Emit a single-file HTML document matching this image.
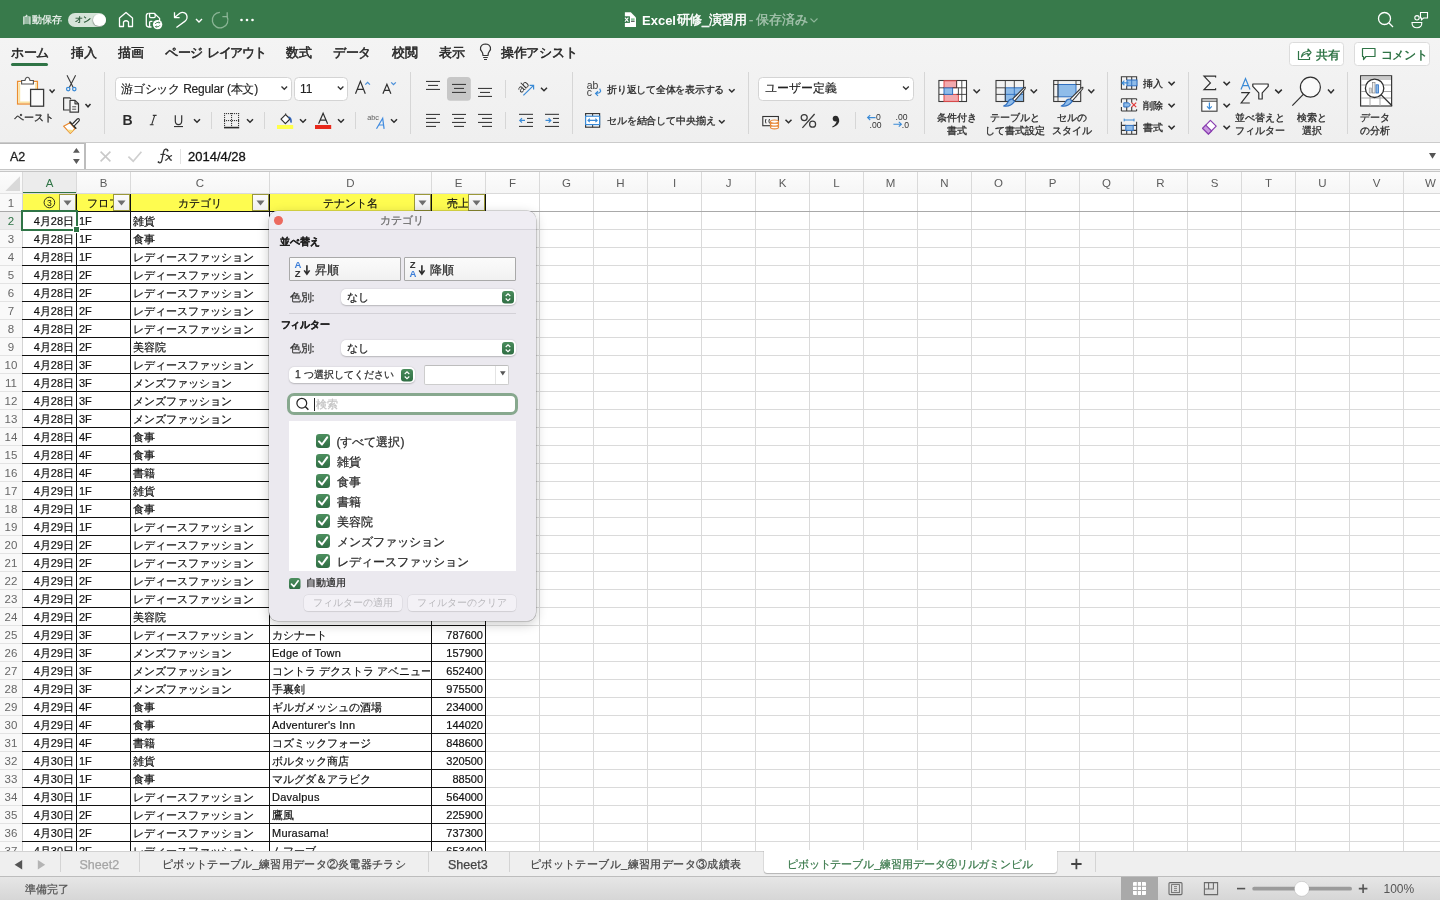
<!DOCTYPE html><html><head><meta charset="utf-8"><style>
*{box-sizing:border-box;margin:0;padding:0}
html,body{width:1440px;height:900px;overflow:hidden;background:#fff;font-family:"Liberation Sans",sans-serif;color:#222}
.a{position:absolute}
#title{left:0;top:0;width:1440px;height:38px;background:#387a4b}
#tabs{left:0;top:38px;width:1440px;height:103px;background:linear-gradient(#f4f4f4,#efefef)}
.tab{position:absolute;top:44.5px;font-size:12.6px;letter-spacing:-0.3px;-webkit-text-stroke:0.5px #262626;color:#262626;white-space:nowrap}
.sep{position:absolute;width:1px;background:#d4d4d4}
.chev{position:absolute;width:6px;height:4px}
.lbl{position:absolute;font-size:10px;color:#2b2b2b;-webkit-text-stroke:0.3px #2b2b2b;text-align:center;line-height:13px;white-space:nowrap}
#fbar{left:0;top:141px;width:1440px;height:30px;background:#f0f0f0}
#colhdr{left:0;top:171px;width:1440px;height:22px;background:#f8f8f8;border-bottom:1px solid #cfcfcf}
.ch{position:absolute;top:0;height:21px;line-height:21px;font-size:11.5px;color:#5c5c5c;text-align:center;padding-top:0.5px;padding-left:1px}
.rh{position:absolute;left:0;width:22px;height:17px;line-height:17px;font-size:11.5px;color:#666;text-align:center}
.cell{position:absolute;height:17px;line-height:17px;font-size:11px;color:#111;-webkit-text-stroke:0.2px #111;white-space:nowrap;overflow:hidden}
</style></head><body><div id="root" style="position:absolute;left:0;top:0;width:1440px;height:900px;overflow:hidden;will-change:transform">
<div id="title" class="a">
<div class="a" style="left:22px;top:14.5px;font-size:10px;line-height:1;color:#dfe9e2;font-weight:bold;white-space:nowrap">自動保存</div>
<div class="a" style="left:68px;top:13px;width:38px;height:14px;border-radius:7px;background:#d6e4d9"></div>
<div class="a" style="left:75px;top:16px;font-size:8px;line-height:1;color:#2c5a3a;-webkit-text-stroke:0.35px #2c5a3a">オン</div>
<div class="a" style="left:93px;top:13.8px;width:12.6px;height:12.6px;border-radius:50%;background:#fff;box-shadow:-0.5px 0.8px 1.2px rgba(0,0,0,.35)"></div>
</div>
<div class="a" style="left:642px;top:13.5px;font-size:13px;line-height:1;font-weight:bold;color:#fff;white-space:nowrap">Excel</div>
<div class="a" style="left:676.5px;top:13.5px;font-size:12.6px;line-height:1;color:#fff;white-space:nowrap;-webkit-text-stroke:0.45px #fff;letter-spacing:-0.3px">研修_演習用</div>
<div class="a" style="left:749px;top:13.5px;font-size:12.6px;line-height:1;color:#a3c2ac;white-space:nowrap;-webkit-text-stroke:0.4px #a3c2ac;letter-spacing:-0.2px">- 保存済み</div>
<div id="tabs" class="a"></div>
<div class="tab" style="left:11px">ホーム</div>
<div class="tab" style="left:71px">挿入</div>
<div class="tab" style="left:118px">描画</div>
<div class="tab" style="left:165px">ページ<span style="letter-spacing:0"> </span><span style="letter-spacing:-1.1px">レイアウト</span></div>
<div class="tab" style="left:286px">数式</div>
<div class="tab" style="left:333px">データ</div>
<div class="tab" style="left:392px">校閲</div>
<div class="tab" style="left:439px">表示</div>
<div class="tab" style="left:501px">操作アシスト</div>
<div class="a" style="left:11px;top:63px;width:37px;height:3px;border-radius:2px;background:#2f7446"></div>
<svg class="a" style="left:0;top:0" width="1440" height="141" viewBox="0 0 1440 141" fill="none" stroke-linecap="butt">
<!-- title bar icons -->
<g stroke="#fff" stroke-width="1.3" fill="none">
 <path d="M119.5 26.5 V18 L126 12.5 L132.5 18 V26.5 H128.5 V22 Q126 19.5 123.5 22 V26.5 Z" stroke-linejoin="round"/>
 <path d="M149 13.3 H154.2 L159.6 18.4 V21 M151.5 27 H148.6 Q146.3 27 146.3 24.6 V15.7 Q146.3 13.3 148.7 13.3" stroke-linejoin="round"/>
 <path d="M149.6 13.5 V16.6 Q149.6 17.6 150.6 17.6 H154.2 Q155.2 17.6 155.2 16.6 V13.8" />
 <path d="M149.6 27 V22.4 Q149.6 21.4 150.6 21.4 H152.4" />
 <circle cx="157.6" cy="24.6" r="4.7" fill="#fff" stroke="none"/>
 <path d="M155.2 24 Q156 22.2 158.2 22.4 L159.6 22.6 M158.8 21.6 L159.8 22.6 L158.8 23.4 M160 25.2 Q159.2 27 157 26.8 L155.6 26.6 M156.4 27.6 L155.4 26.6 L156.4 25.8" stroke="#387a4b" stroke-width="0.9"/>
 <path d="M174.5 12.2 V17.6 H179.6 M174.6 17.5 L179.8 13.2 Q182.2 11.8 184.6 12.9 Q187.6 14.6 186.9 18.4 Q186.5 20.2 184.8 21.4 L176.4 27.6" stroke-linejoin="round"/>
 <path d="M196 19 L199 22 L202 19" stroke-width="1.4"/>
 <g stroke="#8bb596"><path d="M227 16.4 A7.8 7.8 0 1 1 219.9 12.3" /><path d="M227.2 12.2 V16.6 H222.4"/></g>
 <circle cx="241.5" cy="20" r="1.3" fill="#fff" stroke="none"/><circle cx="247" cy="20" r="1.3" fill="#fff" stroke="none"/><circle cx="252.5" cy="20" r="1.3" fill="#fff" stroke="none"/>
 <circle cx="1384.5" cy="18.5" r="6"/><path d="M1389 23 L1393 27"/>
 <circle cx="1417" cy="17.8" r="2.2" stroke-width="1.1"/>
 <path d="M1412 22.5 H1421.8 Q1422 27.8 1417 27.8 Q1412 27.8 1412 22.5 Z" stroke-width="1.1"/>
 <path d="M1420.5 12.5 H1427.5 V18 H1423.5 L1421.5 19.8 V18 H1420.5 Z" stroke-width="1.1"/>
</g>
<path d="M810.5 18.5 L814 22 L817.5 18.5" stroke="#8fb79b" stroke-width="1.1" fill="none"/>
<!-- file icon in title -->
<path d="M624.9 12.3 H630.8 L636 17.4 V26.9 H624.9 Z" fill="#fff"/>
<rect x="623.4" y="16.3" width="6.5" height="6.6" fill="#2f7446"/>
<path d="M624.9 17.6 L628.4 21.6 M628.4 17.6 L624.9 21.6" stroke="#fff" stroke-width="1.1"/>
<rect x="631" y="18.3" width="3.6" height="2.4" fill="#8cc59c"/><rect x="631" y="20.9" width="3.6" height="1" fill="#555"/>
<!-- tab row buttons -->
<rect x="1289.5" y="42.5" width="54" height="23" rx="3" fill="#fff" stroke="#dcdcdc"/>
<rect x="1354.5" y="42.5" width="75" height="23" rx="3" fill="#fff" stroke="#dcdcdc"/>
<g stroke="#2f7446" stroke-width="1.2" fill="none">
 <path d="M1298.5 51 V59.5 H1309.5 V57"/>
 <path d="M1301.5 57 Q1302 51.5 1308 51.5 V49 L1311 52.5 L1308 56 V53.5 Q1304 53.5 1301.5 57 Z" stroke-linejoin="round"/>
 <path d="M1362.5 48.5 H1375 V56.5 H1366 L1363.5 59.5 V56.5 H1362.5 Z" stroke-linejoin="round"/>
</g>
<!-- ribbon separators -->
<g fill="#d6d6d6">
 <rect x="104" y="72" width="1" height="62"/>
 <rect x="410" y="72" width="1" height="62"/>
 <rect x="572" y="72" width="1" height="62"/>
 <rect x="748" y="72" width="1" height="62"/>
 <rect x="924" y="72" width="1" height="62"/>
 <rect x="1107" y="72" width="1" height="62"/>
 <rect x="1188" y="72" width="1" height="62"/>
 <rect x="1347" y="72" width="1" height="62"/>
 <rect x="211" y="112" width="1" height="17"/>
 <rect x="264" y="112" width="1" height="17"/>
 <rect x="355" y="112" width="1" height="17"/>
 <rect x="505" y="80" width="1" height="18"/>
 <rect x="505" y="112" width="1" height="17"/>
 <rect x="855" y="112" width="1" height="17"/>
</g>
<!-- clipboard -->
<defs><linearGradient id="clipg" x1="0" y1="0" x2="0" y2="1"><stop offset="0" stop-color="#fffdf5"/><stop offset="1" stop-color="#fbe7a6"/></linearGradient></defs>
<rect x="17.6" y="81.4" width="19.8" height="22.6" fill="#fff" stroke="#eb8d2f" stroke-width="1.3"/><path d="M19.4 83 V102.2 H36 V83" fill="none" stroke="#fae3a2" stroke-width="1.6"/>
<path d="M21.6 84 V80.5 H25 Q25.5 77.3 27.5 77.3 Q29.5 77.3 30 80.5 H33.4 V84 Z" fill="#fff" stroke="#555" stroke-width="1.1"/>
<rect x="30.6" y="89.4" width="13" height="16.8" fill="#fbfbfb" stroke="#3a3a3a" stroke-width="1.3"/>
<!-- font boxes -->
<rect x="115.5" y="77.5" width="176" height="23" rx="4" fill="#fff" stroke="#d4d4d4"/>
<rect x="294.5" y="77.5" width="53" height="23" rx="4" fill="#fff" stroke="#d4d4d4"/>
<rect x="758.5" y="77.5" width="155" height="23" rx="4" fill="#fff" stroke="#d4d4d4"/>
<!-- chevrons -->
<g stroke="#2e2e2e" stroke-width="1.5" fill="none" stroke-linejoin="miter">
 <path d="M49.6 89.6 L52.1 92.4 L54.6 89.6"/>
 <path d="M85.5 104 L88 106.8 L90.5 104"/>
 <path d="M194 119.3 L197 122.3 L200 119.3"/>
 <path d="M247 119.3 L250 122.3 L253 119.3"/>
 <path d="M300 119.3 L303 122.3 L306 119.3"/>
 <path d="M338 119.3 L341 122.3 L344 119.3"/>
 <path d="M391 119.3 L394 122.3 L397 119.3"/>
 <path d="M541 87.8 L544 90.8 L547 87.8"/>
 <path d="M729 89.2 L731.8 92 L734.6 89.2"/>
 <path d="M719 120.2 L721.8 123 L724.6 120.2"/>
 <path d="M785.5 119.8 L788.5 122.8 L791.5 119.8"/>
 <path d="M973.5 89.5 L976.7 92.7 L979.9 89.5"/>
 <path d="M1030.6 89.5 L1033.8 92.7 L1037 89.5"/>
 <path d="M1088.3 89.5 L1091.3 92.7 L1094.3 89.5"/>
 <path d="M1168.5 81.8 L1171.6 84.9 L1174.7 81.8"/>
 <path d="M1168.5 103.8 L1171.6 106.9 L1174.7 103.8"/>
 <path d="M1168.5 125.8 L1171.6 128.9 L1174.7 125.8"/>
 <path d="M1223.5 81.8 L1226.7 84.9 L1229.9 81.8"/>
 <path d="M1223.5 103.8 L1226.7 106.9 L1229.9 103.8"/>
 <path d="M1223.5 125.8 L1226.7 128.9 L1229.9 125.8"/>
 <path d="M1275.2 89.6 L1278.5 92.9 L1281.8 89.6"/>
 <path d="M1328 89.6 L1331 92.9 L1334 89.6"/>
</g>
<!-- dropdown chevrons in boxes -->
<g stroke="#333" stroke-width="1.3" fill="none">
 <path d="M281.5 86.5 L284.3 89.3 L287.1 86.5"/>
 <path d="M337.8 86.5 L340.6 89.3 L343.4 86.5"/>
 <path d="M903 86.5 L905.9 89.3 L908.8 86.5"/>
</g>
<!-- scissors -->
<g stroke="#3a3a3a" stroke-width="1.1" fill="none">
 <path d="M67 75.3 L73.2 87.6 M75.6 75.3 L69.3 87.6"/>
</g>
<g stroke="#3a8ad6" stroke-width="1.2" fill="none">
 <circle cx="68.2" cy="89.1" r="1.7"/><circle cx="74.3" cy="89.1" r="1.7"/>
</g>
<!-- copy -->
<g stroke="#3a3a3a" stroke-width="1.2" fill="none" stroke-linejoin="round">
 <path d="M69.5 110 H63.6 V97.8 H69.8 L71 99.2"/>
 <path d="M70 100.4 H75 L78.5 103.8 V112.2 H70 Z" fill="#f7f7f7"/>
 <path d="M75 100.4 V103.8 H78.5"/>
 <path d="M72.2 106.8 H76.2 M72.2 109.2 H76.2" stroke-width="0.9"/>
</g>
<!-- format painter -->
<path d="M63.6 126.2 L70 122.8 L75 128.6 L70.3 133.4 Z" fill="#fff" stroke="#e8892e" stroke-width="1.2" stroke-linejoin="round"/>
<path d="M66.8 129.4 L73.6 130 L70.3 133.2 Z" fill="#f6dc85"/>
<path d="M70 122 L75.8 128.2" stroke="#2b2b2b" stroke-width="1.6" stroke-linecap="round"/>
<path d="M72.4 124 L77.3 119 Q78.3 118.2 79.1 119 Q79.8 119.9 79 120.8 L74.3 125.9" fill="#fff" stroke="#2b2b2b" stroke-width="1.1" stroke-linejoin="round"/>
<!-- A^ A v -->
<g stroke="#2f2f2f" stroke-width="1.2" fill="none">
 <path d="M355.5 93.8 L360.4 81.3 L365.3 93.8 M357.3 89.4 H363.5"/>
 <path d="M382.9 93.8 L386.9 84.3 L390.9 93.8 M384.5 90.4 H389.3"/>
</g>
<g stroke="#4a8fd9" stroke-width="1.3" fill="none">
 <path d="M365.3 84.6 L367.6 82.3 L369.9 84.6"/>
 <path d="M391.2 82.4 L393.5 84.7 L395.8 82.4"/>
</g>
<!-- B I U -->
<text x="122.5" y="125" font-size="14" font-weight="bold" fill="#2b2b2b" font-family="Liberation Sans">B</text>
<path d="M152.8 115.4 H156.6 M149.8 124.7 H153.6 M154.7 115.4 L151.7 124.7" stroke="#333" stroke-width="1.1"/>
<path d="M175.3 115.2 V120.8 Q175.3 124.6 178.5 124.6 Q181.7 124.6 181.7 120.8 V115.2" stroke="#333" stroke-width="1.2" fill="none"/>
<rect x="174" y="126" width="9" height="1.1" fill="#333"/>
<!-- borders icon -->
<g fill="#3a3a3a"><rect x="224" y="113" width="1.1" height="1.1"/><rect x="224" y="120" width="1.1" height="1.1"/><rect x="226" y="113" width="1.1" height="1.1"/><rect x="226" y="120" width="1.1" height="1.1"/><rect x="228" y="113" width="1.1" height="1.1"/><rect x="228" y="120" width="1.1" height="1.1"/><rect x="230" y="113" width="1.1" height="1.1"/><rect x="230" y="120" width="1.1" height="1.1"/><rect x="232" y="113" width="1.1" height="1.1"/><rect x="232" y="120" width="1.1" height="1.1"/><rect x="234" y="113" width="1.1" height="1.1"/><rect x="234" y="120" width="1.1" height="1.1"/><rect x="236" y="113" width="1.1" height="1.1"/><rect x="236" y="120" width="1.1" height="1.1"/><rect x="238" y="113" width="1.1" height="1.1"/><rect x="238" y="120" width="1.1" height="1.1"/><rect x="224" y="113" width="1.1" height="1.1"/><rect x="231" y="113" width="1.1" height="1.1"/><rect x="238" y="113" width="1.1" height="1.1"/><rect x="224" y="115" width="1.1" height="1.1"/><rect x="231" y="115" width="1.1" height="1.1"/><rect x="238" y="115" width="1.1" height="1.1"/><rect x="224" y="117" width="1.1" height="1.1"/><rect x="231" y="117" width="1.1" height="1.1"/><rect x="238" y="117" width="1.1" height="1.1"/><rect x="224" y="119" width="1.1" height="1.1"/><rect x="231" y="119" width="1.1" height="1.1"/><rect x="238" y="119" width="1.1" height="1.1"/><rect x="224" y="121" width="1.1" height="1.1"/><rect x="231" y="121" width="1.1" height="1.1"/><rect x="238" y="121" width="1.1" height="1.1"/><rect x="224" y="123" width="1.1" height="1.1"/><rect x="231" y="123" width="1.1" height="1.1"/><rect x="238" y="123" width="1.1" height="1.1"/><rect x="224" y="125" width="1.1" height="1.1"/><rect x="231" y="125" width="1.1" height="1.1"/><rect x="238" y="125" width="1.1" height="1.1"/></g>
<rect x="224" y="126.8" width="15.2" height="1.6" fill="#2b2b2b"/>
<!-- fill color -->
<path d="M281 119.2 L285.6 114.6 L290 119 L285.4 123.6 Z" fill="#fff" stroke="#2f2f2f" stroke-width="1.2" stroke-linejoin="round"/>
<path d="M285.6 114.6 V113.4" stroke="#2f2f2f" stroke-width="1.2"/>
<path d="M288.4 117 Q291.4 117.5 291 122.6" stroke="#2d5fb4" stroke-width="1.6" fill="none"/>
<rect x="277" y="125" width="16.2" height="4" fill="#ffff4b"/>
<!-- font color -->
<path d="M318.6 123.8 L323.1 113.2 L327.6 123.8 M320.1 120.2 H326.1" stroke="#2f2f2f" stroke-width="1.2" fill="none"/>
<rect x="315" y="125" width="16.2" height="4" fill="#e8291c"/>
<!-- abc A -->
<text x="367.2" y="119.6" font-size="7.3" fill="#5e5e5e" font-family="Liberation Sans">abc</text>
<path d="M376.5 128.8 L382.7 118.3 L384.1 128.8 M378.8 125 H383.6" stroke="#3f8be0" stroke-width="1.2" fill="none"/>
<!-- alignment -->
<g fill="#3e3e3e">
 <rect x="447" y="77" width="23.8" height="23.8" rx="3.5" fill="#c7c7c7"/>
 <rect x="426" y="80.9" width="14" height="1.1"/><rect x="428" y="84.9" width="10" height="1.1"/><rect x="426" y="88.9" width="14" height="1.1"/>
 <rect x="452" y="83.9" width="14" height="1.1"/><rect x="454" y="87.9" width="10" height="1.1"/><rect x="452" y="91.9" width="14" height="1.1"/>
 <rect x="478" y="87.9" width="14" height="1.1"/><rect x="480" y="91.9" width="10" height="1.1"/><rect x="478" y="95.9" width="14" height="1.1"/>
 <rect x="426" y="113.9" width="14" height="1.1"/><rect x="426" y="117.9" width="10" height="1.1"/><rect x="426" y="121.9" width="14" height="1.1"/><rect x="426" y="125.9" width="10" height="1.1"/>
 <rect x="452" y="113.9" width="14" height="1.1"/><rect x="454" y="117.9" width="10" height="1.1"/><rect x="452" y="121.9" width="14" height="1.1"/><rect x="454" y="125.9" width="10" height="1.1"/>
 <rect x="478" y="113.9" width="14" height="1.1"/><rect x="482" y="117.9" width="10" height="1.1"/><rect x="478" y="121.9" width="14" height="1.1"/><rect x="482" y="125.9" width="10" height="1.1"/>
 <rect x="519" y="113.8" width="14" height="1.1"/><rect x="527" y="117.9" width="6" height="1.1"/><rect x="527" y="121.9" width="6" height="1.1"/><rect x="519" y="125.9" width="14" height="1.1"/>
 <rect x="545" y="113.8" width="14" height="1.1"/><rect x="553" y="117.9" width="6" height="1.1"/><rect x="553" y="121.9" width="6" height="1.1"/><rect x="545" y="125.9" width="14" height="1.1"/>
</g>
<g stroke="#3a8ad6" stroke-width="1.2" fill="none">
 <path d="M519.5 120.4 H525 M522 118.2 L519.8 120.4 L522 122.6"/>
 <path d="M545.5 120.4 H551 M548.6 118.2 L550.8 120.4 L548.6 122.6"/>
</g>
<!-- orientation -->
<text x="0" y="0" font-size="11" fill="#333" font-family="Liberation Sans" transform="translate(521.2 93.6) rotate(-45)">ab</text>
<g stroke="#3a8ad6" stroke-width="1.2" fill="none">
 <path d="M523.4 95.4 L533.6 85.4 M529.6 85.4 H533.6 V89.4"/>
</g>
<!-- wrap text -->
<text x="586.8" y="88.8" font-size="10.4" fill="#3a3a3a" font-family="Liberation Sans">ab</text>
<text x="586.8" y="96" font-size="10.4" fill="#3a3a3a" font-family="Liberation Sans">c</text>
<path d="M599.6 88.6 Q602.6 93 596.2 93.4 M598 91.2 L595.6 93.4 L598 95.8" stroke="#3a8ad6" stroke-width="1.2" fill="none"/>
<!-- merge -->
<rect x="585.6" y="113.6" width="14" height="13.6" fill="#fff" stroke="#3a3a3a" stroke-width="1.2"/>
<path d="M592.6 113.6 V116.2 M592.6 124.6 V127.2" stroke="#3a3a3a" stroke-width="1.1"/>
<rect x="585.6" y="116.2" width="14" height="8.4" fill="#fff" stroke="#3a8ad6" stroke-width="1.2"/>
<path d="M588 120.4 H597.2 M589.8 118.6 L588 120.4 L589.8 122.2 M595.4 118.6 L597.2 120.4 L595.4 122.2" stroke="#3a8ad6" stroke-width="1.1" fill="none"/>
<!-- accounting -->
<rect x="762.8" y="116.5" width="15.6" height="9.2" fill="#f4f4f4" stroke="#333" stroke-width="1.1"/>
<path d="M766 119 Q764.8 121 766 123.4 M769.5 119 Q768.3 121 769.5 123.4" stroke="#333" stroke-width="1" fill="none"/>
<g fill="#fff" stroke="#e88a3a" stroke-width="1.1">
 <ellipse cx="774.5" cy="127.3" rx="4" ry="1.6"/>
 <path d="M770.5 121.6 V127.3 M778.5 121.6 V127.3"/>
 <ellipse cx="774.5" cy="124.5" rx="4" ry="1.6"/>
 <ellipse cx="774.5" cy="121.6" rx="4" ry="1.6"/>
</g>
<!-- % , -->
<g stroke="#3a3a3a" stroke-width="1.25" fill="none"><circle cx="804.2" cy="117.6" r="3"/><circle cx="812.6" cy="124.2" r="3"/><path d="M814.6 114 L802.4 127.8"/></g>
<circle cx="835.6" cy="118.6" r="2.9" fill="#2b2b2b"/><path d="M837.9 117.4 Q839.6 119 839.2 121.6 Q838.4 125.6 832.6 127.4 L832.2 126.6 Q836.4 124.4 836.6 121" fill="#2b2b2b"/>
<!-- decimals -->
<text x="876" y="120" font-size="8.6" fill="#333" font-family="Liberation Sans">0</text>
<text x="869.5" y="127.8" font-size="8.6" fill="#333" font-family="Liberation Sans">.00</text>
<path d="M867.6 117.6 H875.6 M870.2 115.2 L867.6 117.6 L870.2 120" stroke="#3a8ad6" stroke-width="1.1" fill="none"/>
<text x="895.5" y="120" font-size="8.6" fill="#333" font-family="Liberation Sans">.00</text>
<text x="901.8" y="127.8" font-size="8.6" fill="#333" font-family="Liberation Sans">.0</text>
<path d="M893.4 124.2 H901.4 M898.8 121.8 L901.4 124.2 L898.8 126.6" stroke="#3a8ad6" stroke-width="1.1" fill="none"/>
<!-- conditional formatting -->
<rect x="938.9" y="80.5" width="27.6" height="21" fill="#fff" stroke="#3a3a3a" stroke-width="1.1"/>
<rect x="944" y="80.8" width="12.6" height="6.9" fill="#f2a9ae" stroke="#e04848" stroke-width="1"/>
<rect x="944" y="94.4" width="14.4" height="7" fill="#f2a9ae" stroke="#e04848" stroke-width="1"/>
<rect x="944" y="87.9" width="8.6" height="6.5" fill="#8fbce9" stroke="#2f6fc0" stroke-width="1"/>
<path d="M939 87.8 H944 M952.6 87.8 H966.5 M939 94.4 H944 M956.6 94.4 H966.5 M961.8 80.5 V101.5 M958.4 87.8 V94.4 M956.6 87.8 V80.5" stroke="#3a3a3a" stroke-width="0.9"/>
<!-- table format -->
<rect x="1005.3" y="87.8" width="18.3" height="14" fill="#8fbce9"/>
<path d="M1005.3 101.5 V87.8 H1023.6" stroke="#2f6fc0" stroke-width="1"/>
<path d="M1014.3 87.8 V101.5 M1005.3 94.4 H1023.6" stroke="#2f6fc0" stroke-width="0.9"/>
<rect x="996" y="80.5" width="27.6" height="21" fill="none" stroke="#3a3a3a" stroke-width="1.1"/>
<path d="M1005.3 80.5 V101.5 M1014.3 80.5 V87.8 M996 87.8 H1005.3 M996 94.4 H1005.3" stroke="#3a3a3a" stroke-width="0.9"/>
<!-- cell styles -->
<rect x="1058" y="84.5" width="18" height="12.3" fill="#8fbce9" stroke="#2f6fc0" stroke-width="1"/>
<rect x="1053.7" y="80.5" width="27" height="21" fill="none" stroke="#3a3a3a" stroke-width="1.1"/>
<path d="M1058 80.5 V101.5 M1076 80.5 V84.5 M1053.7 84.5 H1058 M1076 84.5 H1080.7 M1053.7 96.8 H1058" stroke="#3a3a3a" stroke-width="0.9"/>
<!-- brushes -->
<g id="brush1">
 <path d="M1012.5 99.2 L1023.6 88 Q1026.2 86 1025 89 L1014.5 101.2 Z" fill="#fff" stroke="#3a3a3a" stroke-width="1.1" stroke-linejoin="round"/>
 <path d="M1012.2 99.2 Q1009.2 98.8 1007.8 102.2 Q1006.8 105 1003.6 106 Q1010.4 107.2 1014.6 101.4 Z" fill="#8fbce9" stroke="#2f6fc0" stroke-width="1.1" stroke-linejoin="round"/>
</g>
<g transform="translate(57.6 0)">
 <path d="M1012.5 99.2 L1023.6 88 Q1026.2 86 1025 89 L1014.5 101.2 Z" fill="#fff" stroke="#3a3a3a" stroke-width="1.1" stroke-linejoin="round"/>
 <path d="M1012.2 99.2 Q1009.2 98.8 1007.8 102.2 Q1006.8 105 1003.6 106 Q1010.4 107.2 1014.6 101.4 Z" fill="#8fbce9" stroke="#2f6fc0" stroke-width="1.1" stroke-linejoin="round"/>
</g>
<!-- insert/delete/format cells -->
<g stroke="#3a3a3a" stroke-width="1.1" fill="none">
 <path d="M1121.4 76.8 H1136.6 V89.2 H1121.4 Z M1126.7 76.8 V80 M1131.7 76.8 V80 M1126.7 85.8 V89.2 M1131.7 85.8 V89.2 M1121.4 80 V85.8"/>
</g>
<rect x="1127" y="80" width="10" height="5.8" fill="#8fbce9" stroke="#2f6fc0" stroke-width="1"/>
<path d="M1131.7 80 V85.8" stroke="#2f6fc0" stroke-width="0.9"/>
<path d="M1122 82.9 H1128.5 M1124.4 80.6 L1122 82.9 L1124.4 85.2" stroke="#3a8ad6" stroke-width="1.2" fill="none"/>
<g stroke="#3a3a3a" stroke-width="1.1" fill="none">
 <path d="M1121.4 98.8 H1136.6 M1121.4 111 H1136.6 M1121.4 98.8 V102.8 M1121.4 107 V111 M1136.6 98.8 V100.6 M1136.6 109.2 V111 M1126.7 98.8 V102.8 M1131.7 98.8 V102.8 M1126.7 107 V111 M1131.7 107 V111"/>
</g>
<path d="M1123.8 102.8 H1128.6 L1130.4 104.9 L1128.6 107 H1123.8 Z" fill="#8fbce9" stroke="#2f6fc0" stroke-width="1"/>
<path d="M1131.6 102.6 L1136.2 107.2 M1136.2 102.6 L1131.6 107.2" stroke="#e23b3b" stroke-width="1.2"/>
<g stroke="#3a3a3a" stroke-width="1.1" fill="none">
 <path d="M1121.4 121.8 V134.2 H1136.6 V121.8 M1121.4 125.4 H1125.8 M1133.2 125.4 H1136.6 M1121.4 130.4 H1125.8 M1133.2 130.4 H1136.6 M1126.7 130.4 V134.2 M1131.7 130.4 V134.2"/>
</g>
<rect x="1125.8" y="125.4" width="7.4" height="5" fill="#8fbce9" stroke="#2f6fc0" stroke-width="1"/>
<path d="M1124.2 120 H1134 M1124.2 118.6 V121.4 M1134 118.6 V121.4" stroke="#3a8ad6" stroke-width="1"/>
<!-- sigma -->
<path d="M1215.6 77.6 V76.2 H1204 L1210.4 82.9 L1204 89.6 H1215.6 V88.2" stroke="#2f2f2f" stroke-width="1.2" fill="none" stroke-linejoin="miter"/>
<!-- fill down -->
<rect x="1201.8" y="98.8" width="15.2" height="12.4" fill="#fff" stroke="#3a3a3a" stroke-width="1.1"/>
<path d="M1201.8 101.2 H1217" stroke="#3a3a3a" stroke-width="1"/>
<path d="M1209.4 102.6 V108.8 M1207 106.4 L1209.4 108.8 L1211.8 106.4" stroke="#3a8ad6" stroke-width="1.2" fill="none"/>
<!-- eraser -->
<path d="M1202.6 128.4 L1210.4 120.4 L1216.2 126.2 L1208.4 134 Z" fill="#fff" stroke="#8a3fb0" stroke-width="1.2" stroke-linejoin="round"/>
<path d="M1202.6 128.4 L1205.8 125.2 L1211.6 131 L1208.4 134 Z" fill="#c99ae0" stroke="#8a3fb0" stroke-width="1.2" stroke-linejoin="round"/>
<!-- sort filter -->
<path d="M1241 89.6 L1245.5 78.6 L1250 89.6 M1242.6 85.6 H1248.4" stroke="#3a8ad6" stroke-width="1.2" fill="none"/>
<path d="M1241.2 92.6 H1249.2 L1241.2 103 H1249.8" stroke="#2f2f2f" stroke-width="1.2" fill="none"/>
<path d="M1252.8 84 H1268.2 V86.4 L1262.2 92.8 V99 H1258.8 V92.8 L1252.8 86.4 Z" fill="#fff" stroke="#2f2f2f" stroke-width="1.2" stroke-linejoin="round"/>
<!-- find -->
<circle cx="1310.4" cy="87.2" r="10" fill="#fafafa" stroke="#2f2f2f" stroke-width="1.2"/>
<path d="M1303.3 94.3 L1292.3 105.6" stroke="#2f2f2f" stroke-width="1.2"/>
<!-- data analysis -->
<rect x="1360.6" y="75.8" width="31" height="30.2" fill="#fff" stroke="#3a3a3a" stroke-width="1.2"/>
<rect x="1361.2" y="76.4" width="29.8" height="3.6" fill="#c9c9c9"/>
<path d="M1361 85 H1391 M1361 91.5 H1391 M1361 98 H1391 M1370 80 V106 M1380 80 V106" stroke="#a8a8a8" stroke-width="1"/>
<circle cx="1374.6" cy="88.3" r="9.2" fill="#fff" stroke="#2f2f2f" stroke-width="1.3"/>
<path d="M1381.2 94.9 L1392 105.8" stroke="#2f2f2f" stroke-width="1.3"/>
<rect x="1369.2" y="88" width="2.4" height="5" fill="#d9d9d9" stroke="#999" stroke-width="0.6"/>
<rect x="1372.6" y="82.6" width="2.4" height="10.4" fill="#eee" stroke="#777" stroke-width="0.6"/>
<rect x="1376" y="84.8" width="2.6" height="8.2" fill="#8fbce9" stroke="#2f6fc0" stroke-width="0.8"/>
</svg>

<svg class="a" style="left:478px;top:43px" width="16" height="18" viewBox="0 0 16 18"><path d="M5 12.5 Q5 10 3.5 8.2 Q2 6.4 2.6 4.3 Q3.6 1.2 7.5 1 Q11.4 1.2 12.4 4.3 Q13 6.4 11.5 8.2 Q10 10 10 12.5 Z M5.2 14.5 H9.8 M6 16.5 H9" fill="none" stroke="#333" stroke-width="1.2" stroke-linejoin="round"/></svg>
<div class="a" style="left:14px;top:113px;font-size:10px;color:#2b2b2b;white-space:nowrap;line-height:1;-webkit-text-stroke:0.3px #2b2b2b;">ペースト</div>
<div class="a" style="left:121px;top:83px;font-size:12px;color:#222;white-space:nowrap;line-height:1;-webkit-text-stroke:0.3px #222;letter-spacing:-0.2px;-webkit-text-stroke:0.15px #222">游ゴシック Regular (本文)</div>
<div class="a" style="left:300px;top:83px;font-size:12px;color:#222;white-space:nowrap;line-height:1;-webkit-text-stroke:0.3px #222;-webkit-text-stroke:0.15px #222">11</div>
<div class="a" style="left:765px;top:83px;font-size:11.5px;color:#222;white-space:nowrap;line-height:1;-webkit-text-stroke:0.3px #222;-webkit-text-stroke:0.15px #222">ユーザー定義</div>
<div class="a" style="left:607px;top:85px;font-size:10px;color:#2b2b2b;white-space:nowrap;line-height:1;-webkit-text-stroke:0.3px #2b2b2b;letter-spacing:-0.25px">折り返して全体を表示する</div>
<div class="a" style="left:607px;top:116px;font-size:10px;color:#2b2b2b;white-space:nowrap;line-height:1;-webkit-text-stroke:0.3px #2b2b2b;letter-spacing:-0.15px">セルを結合して中央揃え</div>
<div class="lbl" style="left:917px;top:111px;width:80px">条件付き<br>書式</div>
<div class="lbl" style="left:975px;top:111px;width:80px">テーブルと<br>して書式設定</div>
<div class="lbl" style="left:1032px;top:111px;width:80px">セルの<br>スタイル</div>
<div class="lbl" style="left:1220px;top:111px;width:80px">並べ替えと<br>フィルター</div>
<div class="lbl" style="left:1272px;top:111px;width:80px">検索と<br>選択</div>
<div class="lbl" style="left:1335px;top:111px;width:80px">データ<br>の分析</div>
<div class="a" style="left:1143px;top:79px;font-size:10px;color:#2b2b2b;white-space:nowrap;line-height:1;-webkit-text-stroke:0.3px #2b2b2b;">挿入</div>
<div class="a" style="left:1143px;top:101px;font-size:10px;color:#2b2b2b;white-space:nowrap;line-height:1;-webkit-text-stroke:0.3px #2b2b2b;">削除</div>
<div class="a" style="left:1143px;top:123px;font-size:10px;color:#2b2b2b;white-space:nowrap;line-height:1;-webkit-text-stroke:0.3px #2b2b2b;">書式</div>
<div class="a" style="left:1315.5px;top:49.5px;font-size:11.5px;color:#2f7446;white-space:nowrap;line-height:1;-webkit-text-stroke:0.3px #2f7446;font-weight:bold;-webkit-text-stroke:0">共有</div>
<div class="a" style="left:1380.5px;top:49.5px;font-size:11.5px;color:#2f7446;white-space:nowrap;line-height:1;-webkit-text-stroke:0.3px #2f7446;font-weight:bold;letter-spacing:-0.3px;-webkit-text-stroke:0">コメント</div>
<div class="a" style="left:0;top:141px;width:1440px;height:31px;background:#f0f0f0"></div>
<div class="a" style="left:0;top:142px;width:1440px;height:1px;background:#cbcbcb"></div>
<div class="a" style="left:0;top:143px;width:1440px;height:26px;background:#fff"></div>
<div class="a" style="left:0;top:143px;width:85px;height:1px;background:#b9b9b9"></div>
<div class="a" style="left:84px;top:143px;width:1.5px;height:26px;background:#bdbdbd"></div>
<div class="a" style="left:0;top:169px;width:1440px;height:1px;background:#c6c6c6"></div>
<div class="a" style="left:0;top:171px;width:1440px;height:1px;background:#c6c6c6"></div>
<div class="a" style="left:10px;top:150.5px;font-size:12.5px;color:#222;line-height:1;-webkit-text-stroke:0.3px #222">A2</div>
<div class="a" style="left:188px;top:150px;font-size:13px;color:#111;line-height:1;-webkit-text-stroke:0.3px #111">2014/4/28</div>
<svg class="a" style="left:0;top:141px" width="1440" height="31" viewBox="0 141 1440 31">
<path d="M73 152.8 L76.4 147.9 L79.8 152.8 Z M73 159.1 L76.4 164 L79.8 159.1 Z" fill="#5a5a5a"/>
<path d="M100.6 151.6 L110.4 161.4 M110.4 151.6 L100.6 161.4" stroke="#c9c9c9" stroke-width="1.6"/>
<path d="M128.4 156.6 L133.2 161.2 L141.4 151.8" stroke="#cfcfcf" stroke-width="1.7" fill="none"/>
<rect x="180" y="149" width="1" height="15" fill="#e2e2e2"/>
<path d="M167.8 150.6 Q167.4 148.8 165.6 149.2 Q164 149.6 163.5 152 L161.9 160.4 Q161.4 162.8 159.6 162.8 Q158.4 162.8 158.3 162" stroke="#333" stroke-width="1.25" fill="none" stroke-linecap="round"/>
<circle cx="167.5" cy="150.5" r="0.9" fill="#333"/><circle cx="158.6" cy="162.2" r="0.9" fill="#333"/>
<path d="M160.4 154.4 H165.5" stroke="#333" stroke-width="1.1"/>
<path d="M166.6 155.4 Q168 155.2 168.6 156.6 L170 159.2 Q170.6 160.4 171.4 160.1" stroke="#333" stroke-width="1.4" fill="none" stroke-linecap="round"/>
<path d="M171.6 155.6 Q170.4 155.8 168.6 157.8 L166.4 159.8 Q165.8 160.4 165.4 160.1" stroke="#333" stroke-width="1.1" fill="none" stroke-linecap="round"/>
<path d="M1429 153 H1436 L1432.5 158.7 Z" fill="#555"/>
</svg>
<div class="a" style="left:0;top:172px;width:1440px;height:21px;background:linear-gradient(#fcfcfc,#f6f6f6)"></div>
<div class="a" style="left:0;top:193px;width:1440px;height:1px;background:#c6c6c6"></div>
<svg class="a" style="left:0;top:172px" width="22" height="21"><path d="M5.3 19 L20 4.2 V19 Z" fill="#d9d9d9"/></svg>
<div class="a" style="left:22px;top:172px;width:54px;height:21px;background:#ececec"></div>
<div class="a" style="left:22px;top:192px;width:55px;height:2px;background:#2f7446"></div>
<div class="a" style="left:22px;top:172px;width:1px;height:21px;background:#dadada"></div>
<div class="ch" style="left:22px;top:172px;width:54px;color:#2f7446;">A</div>
<div class="a" style="left:76px;top:172px;width:1px;height:21px;background:#dadada"></div>
<div class="ch" style="left:76px;top:172px;width:54px;">B</div>
<div class="a" style="left:130px;top:172px;width:1px;height:21px;background:#dadada"></div>
<div class="ch" style="left:130px;top:172px;width:139px;">C</div>
<div class="a" style="left:269px;top:172px;width:1px;height:21px;background:#dadada"></div>
<div class="ch" style="left:269px;top:172px;width:162px;">D</div>
<div class="a" style="left:431px;top:172px;width:1px;height:21px;background:#dadada"></div>
<div class="ch" style="left:431px;top:172px;width:54px;">E</div>
<div class="a" style="left:485px;top:172px;width:1px;height:21px;background:#dadada"></div>
<div class="ch" style="left:485px;top:172px;width:54px;">F</div>
<div class="a" style="left:539px;top:172px;width:1px;height:21px;background:#dadada"></div>
<div class="ch" style="left:539px;top:172px;width:54px;">G</div>
<div class="a" style="left:593px;top:172px;width:1px;height:21px;background:#dadada"></div>
<div class="ch" style="left:593px;top:172px;width:54px;">H</div>
<div class="a" style="left:647px;top:172px;width:1px;height:21px;background:#dadada"></div>
<div class="ch" style="left:647px;top:172px;width:54px;">I</div>
<div class="a" style="left:701px;top:172px;width:1px;height:21px;background:#dadada"></div>
<div class="ch" style="left:701px;top:172px;width:54px;">J</div>
<div class="a" style="left:755px;top:172px;width:1px;height:21px;background:#dadada"></div>
<div class="ch" style="left:755px;top:172px;width:54px;">K</div>
<div class="a" style="left:809px;top:172px;width:1px;height:21px;background:#dadada"></div>
<div class="ch" style="left:809px;top:172px;width:54px;">L</div>
<div class="a" style="left:863px;top:172px;width:1px;height:21px;background:#dadada"></div>
<div class="ch" style="left:863px;top:172px;width:54px;">M</div>
<div class="a" style="left:917px;top:172px;width:1px;height:21px;background:#dadada"></div>
<div class="ch" style="left:917px;top:172px;width:54px;">N</div>
<div class="a" style="left:971px;top:172px;width:1px;height:21px;background:#dadada"></div>
<div class="ch" style="left:971px;top:172px;width:54px;">O</div>
<div class="a" style="left:1025px;top:172px;width:1px;height:21px;background:#dadada"></div>
<div class="ch" style="left:1025px;top:172px;width:54px;">P</div>
<div class="a" style="left:1079px;top:172px;width:1px;height:21px;background:#dadada"></div>
<div class="ch" style="left:1079px;top:172px;width:54px;">Q</div>
<div class="a" style="left:1133px;top:172px;width:1px;height:21px;background:#dadada"></div>
<div class="ch" style="left:1133px;top:172px;width:54px;">R</div>
<div class="a" style="left:1187px;top:172px;width:1px;height:21px;background:#dadada"></div>
<div class="ch" style="left:1187px;top:172px;width:54px;">S</div>
<div class="a" style="left:1241px;top:172px;width:1px;height:21px;background:#dadada"></div>
<div class="ch" style="left:1241px;top:172px;width:54px;">T</div>
<div class="a" style="left:1295px;top:172px;width:1px;height:21px;background:#dadada"></div>
<div class="ch" style="left:1295px;top:172px;width:54px;">U</div>
<div class="a" style="left:1349px;top:172px;width:1px;height:21px;background:#dadada"></div>
<div class="ch" style="left:1349px;top:172px;width:54px;">V</div>
<div class="a" style="left:1403px;top:172px;width:1px;height:21px;background:#dadada"></div>
<div class="ch" style="left:1403px;top:172px;width:54px;">W</div>
<div class="a" style="left:0;top:193px;width:1440px;height:658px;overflow:hidden">
<div class="a" style="left:22px;top:0;width:1418px;height:658px;background-image:repeating-linear-gradient(to bottom,#dadada 0,#dadada 1px,transparent 1px,transparent 18px)"></div>
<div class="a" style="left:76px;top:0;width:1px;height:658px;background:#dadada"></div>
<div class="a" style="left:130px;top:0;width:1px;height:658px;background:#dadada"></div>
<div class="a" style="left:269px;top:0;width:1px;height:658px;background:#dadada"></div>
<div class="a" style="left:431px;top:0;width:1px;height:658px;background:#dadada"></div>
<div class="a" style="left:485px;top:0;width:1px;height:658px;background:#dadada"></div>
<div class="a" style="left:539px;top:0;width:1px;height:658px;background:#dadada"></div>
<div class="a" style="left:593px;top:0;width:1px;height:658px;background:#dadada"></div>
<div class="a" style="left:647px;top:0;width:1px;height:658px;background:#dadada"></div>
<div class="a" style="left:701px;top:0;width:1px;height:658px;background:#dadada"></div>
<div class="a" style="left:755px;top:0;width:1px;height:658px;background:#dadada"></div>
<div class="a" style="left:809px;top:0;width:1px;height:658px;background:#dadada"></div>
<div class="a" style="left:863px;top:0;width:1px;height:658px;background:#dadada"></div>
<div class="a" style="left:917px;top:0;width:1px;height:658px;background:#dadada"></div>
<div class="a" style="left:971px;top:0;width:1px;height:658px;background:#dadada"></div>
<div class="a" style="left:1025px;top:0;width:1px;height:658px;background:#dadada"></div>
<div class="a" style="left:1079px;top:0;width:1px;height:658px;background:#dadada"></div>
<div class="a" style="left:1133px;top:0;width:1px;height:658px;background:#dadada"></div>
<div class="a" style="left:1187px;top:0;width:1px;height:658px;background:#dadada"></div>
<div class="a" style="left:1241px;top:0;width:1px;height:658px;background:#dadada"></div>
<div class="a" style="left:1295px;top:0;width:1px;height:658px;background:#dadada"></div>
<div class="a" style="left:1349px;top:0;width:1px;height:658px;background:#dadada"></div>
<div class="a" style="left:1403px;top:0;width:1px;height:658px;background:#dadada"></div>
<div class="a" style="left:1457px;top:0;width:1px;height:658px;background:#dadada"></div>
<div class="a" style="left:0;top:0;width:22px;height:658px;background:#f9f9f9;background-image:repeating-linear-gradient(to bottom,#e3e3e3 0,#e3e3e3 1px,transparent 1px,transparent 18px)"></div>
<div class="a" style="left:22px;top:0;width:1px;height:658px;background:#d4d4d4"></div>
<div class="a" style="left:0;top:19px;width:22px;height:17px;background:#ececec"></div>
<div class="rh" style="top:1.5px;">1</div>
<div class="rh" style="top:19.5px;color:#2f7446;">2</div>
<div class="rh" style="top:37.5px;">3</div>
<div class="rh" style="top:55.5px;">4</div>
<div class="rh" style="top:73.5px;">5</div>
<div class="rh" style="top:91.5px;">6</div>
<div class="rh" style="top:109.5px;">7</div>
<div class="rh" style="top:127.5px;">8</div>
<div class="rh" style="top:145.5px;">9</div>
<div class="rh" style="top:163.5px;">10</div>
<div class="rh" style="top:181.5px;">11</div>
<div class="rh" style="top:199.5px;">12</div>
<div class="rh" style="top:217.5px;">13</div>
<div class="rh" style="top:235.5px;">14</div>
<div class="rh" style="top:253.5px;">15</div>
<div class="rh" style="top:271.5px;">16</div>
<div class="rh" style="top:289.5px;">17</div>
<div class="rh" style="top:307.5px;">18</div>
<div class="rh" style="top:325.5px;">19</div>
<div class="rh" style="top:343.5px;">20</div>
<div class="rh" style="top:361.5px;">21</div>
<div class="rh" style="top:379.5px;">22</div>
<div class="rh" style="top:397.5px;">23</div>
<div class="rh" style="top:415.5px;">24</div>
<div class="rh" style="top:433.5px;">25</div>
<div class="rh" style="top:451.5px;">26</div>
<div class="rh" style="top:469.5px;">27</div>
<div class="rh" style="top:487.5px;">28</div>
<div class="rh" style="top:505.5px;">29</div>
<div class="rh" style="top:523.5px;">30</div>
<div class="rh" style="top:541.5px;">31</div>
<div class="rh" style="top:559.5px;">32</div>
<div class="rh" style="top:577.5px;">33</div>
<div class="rh" style="top:595.5px;">34</div>
<div class="rh" style="top:613.5px;">35</div>
<div class="rh" style="top:631.5px;">36</div>
<div class="rh" style="top:649.5px;">37</div>
<div class="a" style="left:0;top:18px;width:1440px;height:1px;background:#a9a9a9"></div>
<div class="a" style="left:23px;top:1px;width:462px;height:17px;background:#fefc50"></div>
<div class="a" style="left:22px;top:18px;width:464px;height:1px;background:#111"></div>
<div class="a" style="left:22px;top:36px;width:464px;height:1px;background:#111"></div>
<div class="a" style="left:22px;top:54px;width:464px;height:1px;background:#111"></div>
<div class="a" style="left:22px;top:72px;width:464px;height:1px;background:#111"></div>
<div class="a" style="left:22px;top:90px;width:464px;height:1px;background:#111"></div>
<div class="a" style="left:22px;top:108px;width:464px;height:1px;background:#111"></div>
<div class="a" style="left:22px;top:126px;width:464px;height:1px;background:#111"></div>
<div class="a" style="left:22px;top:144px;width:464px;height:1px;background:#111"></div>
<div class="a" style="left:22px;top:162px;width:464px;height:1px;background:#111"></div>
<div class="a" style="left:22px;top:180px;width:464px;height:1px;background:#111"></div>
<div class="a" style="left:22px;top:198px;width:464px;height:1px;background:#111"></div>
<div class="a" style="left:22px;top:216px;width:464px;height:1px;background:#111"></div>
<div class="a" style="left:22px;top:234px;width:464px;height:1px;background:#111"></div>
<div class="a" style="left:22px;top:252px;width:464px;height:1px;background:#111"></div>
<div class="a" style="left:22px;top:270px;width:464px;height:1px;background:#111"></div>
<div class="a" style="left:22px;top:288px;width:464px;height:1px;background:#111"></div>
<div class="a" style="left:22px;top:306px;width:464px;height:1px;background:#111"></div>
<div class="a" style="left:22px;top:324px;width:464px;height:1px;background:#111"></div>
<div class="a" style="left:22px;top:342px;width:464px;height:1px;background:#111"></div>
<div class="a" style="left:22px;top:360px;width:464px;height:1px;background:#111"></div>
<div class="a" style="left:22px;top:378px;width:464px;height:1px;background:#111"></div>
<div class="a" style="left:22px;top:396px;width:464px;height:1px;background:#111"></div>
<div class="a" style="left:22px;top:414px;width:464px;height:1px;background:#111"></div>
<div class="a" style="left:22px;top:432px;width:464px;height:1px;background:#111"></div>
<div class="a" style="left:22px;top:450px;width:464px;height:1px;background:#111"></div>
<div class="a" style="left:22px;top:468px;width:464px;height:1px;background:#111"></div>
<div class="a" style="left:22px;top:486px;width:464px;height:1px;background:#111"></div>
<div class="a" style="left:22px;top:504px;width:464px;height:1px;background:#111"></div>
<div class="a" style="left:22px;top:522px;width:464px;height:1px;background:#111"></div>
<div class="a" style="left:22px;top:540px;width:464px;height:1px;background:#111"></div>
<div class="a" style="left:22px;top:558px;width:464px;height:1px;background:#111"></div>
<div class="a" style="left:22px;top:576px;width:464px;height:1px;background:#111"></div>
<div class="a" style="left:22px;top:594px;width:464px;height:1px;background:#111"></div>
<div class="a" style="left:22px;top:612px;width:464px;height:1px;background:#111"></div>
<div class="a" style="left:22px;top:630px;width:464px;height:1px;background:#111"></div>
<div class="a" style="left:22px;top:648px;width:464px;height:1px;background:#111"></div>
<div class="a" style="left:22px;top:666px;width:464px;height:1px;background:#111"></div>
<div class="a" style="left:76px;top:1px;width:1px;height:658px;background:#111"></div>
<div class="a" style="left:130px;top:1px;width:1px;height:658px;background:#111"></div>
<div class="a" style="left:269px;top:1px;width:1px;height:658px;background:#111"></div>
<div class="a" style="left:431px;top:1px;width:1px;height:658px;background:#111"></div>
<div class="a" style="left:485px;top:1px;width:1px;height:658px;background:#111"></div>
<svg class="a" style="left:42px;top:2px" width="15" height="15"><circle cx="7.4" cy="7.5" r="5.3" fill="none" stroke="#1a1a1a" stroke-width="0.9"/><text x="7.4" y="10.6" text-anchor="middle" font-size="8.6" fill="#111" font-family="Liberation Sans">3</text></svg>
<div class="cell" style="left:76px;top:2px;width:54px;text-align:center">フロア</div>
<div class="cell" style="left:130px;top:2px;width:139px;text-align:center">カテゴリ</div>
<div class="cell" style="left:269px;top:2px;width:162px;text-align:center">テナント名</div>
<div class="cell" style="left:431px;top:2px;width:54px;text-align:center">売上</div>
<div class="cell" style="left:22px;top:19.6px;width:52px;text-align:right">4月28日</div>
<div class="cell" style="left:79px;top:19.6px;width:50px">1F</div>
<div class="cell" style="left:133px;top:19.6px;width:135px">雑貨</div>
<div class="cell" style="left:22px;top:37.6px;width:52px;text-align:right">4月28日</div>
<div class="cell" style="left:79px;top:37.6px;width:50px">1F</div>
<div class="cell" style="left:133px;top:37.6px;width:135px">食事</div>
<div class="cell" style="left:22px;top:55.6px;width:52px;text-align:right">4月28日</div>
<div class="cell" style="left:79px;top:55.6px;width:50px">1F</div>
<div class="cell" style="left:133px;top:55.6px;width:135px">レディースファッション</div>
<div class="cell" style="left:22px;top:73.6px;width:52px;text-align:right">4月28日</div>
<div class="cell" style="left:79px;top:73.6px;width:50px">2F</div>
<div class="cell" style="left:133px;top:73.6px;width:135px">レディースファッション</div>
<div class="cell" style="left:22px;top:91.6px;width:52px;text-align:right">4月28日</div>
<div class="cell" style="left:79px;top:91.6px;width:50px">2F</div>
<div class="cell" style="left:133px;top:91.6px;width:135px">レディースファッション</div>
<div class="cell" style="left:22px;top:109.6px;width:52px;text-align:right">4月28日</div>
<div class="cell" style="left:79px;top:109.6px;width:50px">2F</div>
<div class="cell" style="left:133px;top:109.6px;width:135px">レディースファッション</div>
<div class="cell" style="left:22px;top:127.6px;width:52px;text-align:right">4月28日</div>
<div class="cell" style="left:79px;top:127.6px;width:50px">2F</div>
<div class="cell" style="left:133px;top:127.6px;width:135px">レディースファッション</div>
<div class="cell" style="left:22px;top:145.6px;width:52px;text-align:right">4月28日</div>
<div class="cell" style="left:79px;top:145.6px;width:50px">2F</div>
<div class="cell" style="left:133px;top:145.6px;width:135px">美容院</div>
<div class="cell" style="left:22px;top:163.6px;width:52px;text-align:right">4月28日</div>
<div class="cell" style="left:79px;top:163.6px;width:50px">3F</div>
<div class="cell" style="left:133px;top:163.6px;width:135px">レディースファッション</div>
<div class="cell" style="left:22px;top:181.6px;width:52px;text-align:right">4月28日</div>
<div class="cell" style="left:79px;top:181.6px;width:50px">3F</div>
<div class="cell" style="left:133px;top:181.6px;width:135px">メンズファッション</div>
<div class="cell" style="left:22px;top:199.6px;width:52px;text-align:right">4月28日</div>
<div class="cell" style="left:79px;top:199.6px;width:50px">3F</div>
<div class="cell" style="left:133px;top:199.6px;width:135px">メンズファッション</div>
<div class="cell" style="left:22px;top:217.6px;width:52px;text-align:right">4月28日</div>
<div class="cell" style="left:79px;top:217.6px;width:50px">3F</div>
<div class="cell" style="left:133px;top:217.6px;width:135px">メンズファッション</div>
<div class="cell" style="left:22px;top:235.6px;width:52px;text-align:right">4月28日</div>
<div class="cell" style="left:79px;top:235.6px;width:50px">4F</div>
<div class="cell" style="left:133px;top:235.6px;width:135px">食事</div>
<div class="cell" style="left:22px;top:253.6px;width:52px;text-align:right">4月28日</div>
<div class="cell" style="left:79px;top:253.6px;width:50px">4F</div>
<div class="cell" style="left:133px;top:253.6px;width:135px">食事</div>
<div class="cell" style="left:22px;top:271.6px;width:52px;text-align:right">4月28日</div>
<div class="cell" style="left:79px;top:271.6px;width:50px">4F</div>
<div class="cell" style="left:133px;top:271.6px;width:135px">書籍</div>
<div class="cell" style="left:22px;top:289.6px;width:52px;text-align:right">4月29日</div>
<div class="cell" style="left:79px;top:289.6px;width:50px">1F</div>
<div class="cell" style="left:133px;top:289.6px;width:135px">雑貨</div>
<div class="cell" style="left:22px;top:307.6px;width:52px;text-align:right">4月29日</div>
<div class="cell" style="left:79px;top:307.6px;width:50px">1F</div>
<div class="cell" style="left:133px;top:307.6px;width:135px">食事</div>
<div class="cell" style="left:22px;top:325.6px;width:52px;text-align:right">4月29日</div>
<div class="cell" style="left:79px;top:325.6px;width:50px">1F</div>
<div class="cell" style="left:133px;top:325.6px;width:135px">レディースファッション</div>
<div class="cell" style="left:22px;top:343.6px;width:52px;text-align:right">4月29日</div>
<div class="cell" style="left:79px;top:343.6px;width:50px">2F</div>
<div class="cell" style="left:133px;top:343.6px;width:135px">レディースファッション</div>
<div class="cell" style="left:22px;top:361.6px;width:52px;text-align:right">4月29日</div>
<div class="cell" style="left:79px;top:361.6px;width:50px">2F</div>
<div class="cell" style="left:133px;top:361.6px;width:135px">レディースファッション</div>
<div class="cell" style="left:22px;top:379.6px;width:52px;text-align:right">4月29日</div>
<div class="cell" style="left:79px;top:379.6px;width:50px">2F</div>
<div class="cell" style="left:133px;top:379.6px;width:135px">レディースファッション</div>
<div class="cell" style="left:22px;top:397.6px;width:52px;text-align:right">4月29日</div>
<div class="cell" style="left:79px;top:397.6px;width:50px">2F</div>
<div class="cell" style="left:133px;top:397.6px;width:135px">レディースファッション</div>
<div class="cell" style="left:22px;top:415.6px;width:52px;text-align:right">4月29日</div>
<div class="cell" style="left:79px;top:415.6px;width:50px">2F</div>
<div class="cell" style="left:133px;top:415.6px;width:135px">美容院</div>
<div class="cell" style="left:22px;top:433.6px;width:52px;text-align:right">4月29日</div>
<div class="cell" style="left:79px;top:433.6px;width:50px">3F</div>
<div class="cell" style="left:133px;top:433.6px;width:135px">レディースファッション</div>
<div class="cell" style="left:272px;top:433.6px;width:158px;">カシナート</div>
<div class="cell" style="left:433px;top:433.6px;width:50px;text-align:right">787600</div>
<div class="cell" style="left:22px;top:451.6px;width:52px;text-align:right">4月29日</div>
<div class="cell" style="left:79px;top:451.6px;width:50px">3F</div>
<div class="cell" style="left:133px;top:451.6px;width:135px">メンズファッション</div>
<div class="cell" style="left:272px;top:451.6px;width:158px;letter-spacing:0.22px;">Edge of Town</div>
<div class="cell" style="left:433px;top:451.6px;width:50px;text-align:right">157900</div>
<div class="cell" style="left:22px;top:469.6px;width:52px;text-align:right">4月29日</div>
<div class="cell" style="left:79px;top:469.6px;width:50px">3F</div>
<div class="cell" style="left:133px;top:469.6px;width:135px">メンズファッション</div>
<div class="cell" style="left:272px;top:469.6px;width:158px;">コントラ デクストラ アベニュー</div>
<div class="cell" style="left:433px;top:469.6px;width:50px;text-align:right">652400</div>
<div class="cell" style="left:22px;top:487.6px;width:52px;text-align:right">4月29日</div>
<div class="cell" style="left:79px;top:487.6px;width:50px">3F</div>
<div class="cell" style="left:133px;top:487.6px;width:135px">メンズファッション</div>
<div class="cell" style="left:272px;top:487.6px;width:158px;">手裏剣</div>
<div class="cell" style="left:433px;top:487.6px;width:50px;text-align:right">975500</div>
<div class="cell" style="left:22px;top:505.6px;width:52px;text-align:right">4月29日</div>
<div class="cell" style="left:79px;top:505.6px;width:50px">4F</div>
<div class="cell" style="left:133px;top:505.6px;width:135px">食事</div>
<div class="cell" style="left:272px;top:505.6px;width:158px;">ギルガメッシュの酒場</div>
<div class="cell" style="left:433px;top:505.6px;width:50px;text-align:right">234000</div>
<div class="cell" style="left:22px;top:523.6px;width:52px;text-align:right">4月29日</div>
<div class="cell" style="left:79px;top:523.6px;width:50px">4F</div>
<div class="cell" style="left:133px;top:523.6px;width:135px">食事</div>
<div class="cell" style="left:272px;top:523.6px;width:158px;letter-spacing:0.22px;">Adventurer's Inn</div>
<div class="cell" style="left:433px;top:523.6px;width:50px;text-align:right">144020</div>
<div class="cell" style="left:22px;top:541.6px;width:52px;text-align:right">4月29日</div>
<div class="cell" style="left:79px;top:541.6px;width:50px">4F</div>
<div class="cell" style="left:133px;top:541.6px;width:135px">書籍</div>
<div class="cell" style="left:272px;top:541.6px;width:158px;">コズミックフォージ</div>
<div class="cell" style="left:433px;top:541.6px;width:50px;text-align:right">848600</div>
<div class="cell" style="left:22px;top:559.6px;width:52px;text-align:right">4月30日</div>
<div class="cell" style="left:79px;top:559.6px;width:50px">1F</div>
<div class="cell" style="left:133px;top:559.6px;width:135px">雑貨</div>
<div class="cell" style="left:272px;top:559.6px;width:158px;">ボルタック商店</div>
<div class="cell" style="left:433px;top:559.6px;width:50px;text-align:right">320500</div>
<div class="cell" style="left:22px;top:577.6px;width:52px;text-align:right">4月30日</div>
<div class="cell" style="left:79px;top:577.6px;width:50px">1F</div>
<div class="cell" style="left:133px;top:577.6px;width:135px">食事</div>
<div class="cell" style="left:272px;top:577.6px;width:158px;">マルグダ＆アラビク</div>
<div class="cell" style="left:433px;top:577.6px;width:50px;text-align:right">88500</div>
<div class="cell" style="left:22px;top:595.6px;width:52px;text-align:right">4月30日</div>
<div class="cell" style="left:79px;top:595.6px;width:50px">1F</div>
<div class="cell" style="left:133px;top:595.6px;width:135px">レディースファッション</div>
<div class="cell" style="left:272px;top:595.6px;width:158px;letter-spacing:0.22px;">Davalpus</div>
<div class="cell" style="left:433px;top:595.6px;width:50px;text-align:right">564000</div>
<div class="cell" style="left:22px;top:613.6px;width:52px;text-align:right">4月30日</div>
<div class="cell" style="left:79px;top:613.6px;width:50px">2F</div>
<div class="cell" style="left:133px;top:613.6px;width:135px">レディースファッション</div>
<div class="cell" style="left:272px;top:613.6px;width:158px;">鷹風</div>
<div class="cell" style="left:433px;top:613.6px;width:50px;text-align:right">225900</div>
<div class="cell" style="left:22px;top:631.6px;width:52px;text-align:right">4月30日</div>
<div class="cell" style="left:79px;top:631.6px;width:50px">2F</div>
<div class="cell" style="left:133px;top:631.6px;width:135px">レディースファッション</div>
<div class="cell" style="left:272px;top:631.6px;width:158px;letter-spacing:0.22px;">Murasama!</div>
<div class="cell" style="left:433px;top:631.6px;width:50px;text-align:right">737300</div>
<div class="cell" style="left:22px;top:649.6px;width:52px;text-align:right">4月30日</div>
<div class="cell" style="left:79px;top:649.6px;width:50px">2F</div>
<div class="cell" style="left:133px;top:649.6px;width:135px">レディースファッション</div>
<div class="cell" style="left:272px;top:649.6px;width:158px;">ムフーブ</div>
<div class="cell" style="left:433px;top:649.6px;width:50px;text-align:right">653400</div>
<div class="a" style="left:59px;top:1px;width:17px;height:17px;background:linear-gradient(#fbfbfb,#efefef);border:1px solid #9a9838"></div>
<svg class="a" style="left:63px;top:7px" width="9" height="6"><path d="M0.5 0.5 H8.5 L4.5 5.6 Z" fill="#6e6e6e"/></svg>
<div class="a" style="left:113px;top:1px;width:17px;height:17px;background:linear-gradient(#fbfbfb,#efefef);border:1px solid #9a9838"></div>
<svg class="a" style="left:117px;top:7px" width="9" height="6"><path d="M0.5 0.5 H8.5 L4.5 5.6 Z" fill="#6e6e6e"/></svg>
<div class="a" style="left:252px;top:1px;width:17px;height:17px;background:linear-gradient(#fbfbfb,#efefef);border:1px solid #9a9838"></div>
<svg class="a" style="left:256px;top:7px" width="9" height="6"><path d="M0.5 0.5 H8.5 L4.5 5.6 Z" fill="#6e6e6e"/></svg>
<div class="a" style="left:414px;top:1px;width:17px;height:17px;background:linear-gradient(#fbfbfb,#efefef);border:1px solid #9a9838"></div>
<svg class="a" style="left:418px;top:7px" width="9" height="6"><path d="M0.5 0.5 H8.5 L4.5 5.6 Z" fill="#6e6e6e"/></svg>
<div class="a" style="left:468px;top:1px;width:17px;height:17px;background:linear-gradient(#fbfbfb,#efefef);border:1px solid #9a9838"></div>
<svg class="a" style="left:472px;top:7px" width="9" height="6"><path d="M0.5 0.5 H8.5 L4.5 5.6 Z" fill="#6e6e6e"/></svg>
<div class="a" style="left:21px;top:17px;width:57px;height:21px;border:2px solid #2f7446"></div>
<div class="a" style="left:74px;top:34px;width:5px;height:5px;background:#2f7446;outline:1px solid #fff"></div>
</div>
<div class="a" style="left:0;top:851px;width:1440px;height:26px;background:#efefef"></div>
<div class="a" style="left:0;top:851px;width:1440px;height:1px;background:#d2d2d2"></div>
<div class="a" style="left:0;top:876px;width:1440px;height:1px;background:#bdbdbd"></div>
<div class="a" style="left:764px;top:851px;width:293px;height:22px;background:#fff;border-radius:0 0 3px 3px;box-shadow:0 1px 1px rgba(0,0,0,.25),-0.5px 0 0 rgba(0,0,0,.12),0.5px 0 0 rgba(0,0,0,.12)"></div>
<div class="a" style="left:764px;top:850px;width:293px;height:3px;background:#fff"></div>
<svg class="a" style="left:0;top:851px" width="1440" height="26" viewBox="0 851 1440 26">
<path d="M22.2 860 L14.6 864.8 L22.2 869.6 Z" fill="#555"/>
<path d="M37.8 860 L45.2 864.8 L37.8 869.6 Z" fill="#b4b4b4"/>
<rect x="60" y="852" width="1" height="20" fill="#d4d4d4"/>
<rect x="139" y="852" width="1" height="20" fill="#d4d4d4"/>
<rect x="428" y="852" width="1" height="20" fill="#d4d4d4"/>
<rect x="509" y="852" width="1" height="20" fill="#d4d4d4"/>
<rect x="1095" y="852" width="1" height="20" fill="#d4d4d4"/>
<path d="M1071.2 864 H1081.6 M1076.4 858.8 V869.2" stroke="#444" stroke-width="1.8"/>
</svg>
<div class="a" style="left:79.5px;top:858.5px;font-size:12.5px;color:#a5a5a5;white-space:nowrap;line-height:1;-webkit-text-stroke:0.25px #a5a5a5;">Sheet2</div>
<div class="a" style="left:162.2px;top:858.5px;font-size:11px;color:#444;white-space:nowrap;line-height:1;-webkit-text-stroke:0.25px #444;letter-spacing:0.3px">ピボットテーブル_練習用データ②炎電器チラシ</div>
<div class="a" style="left:448px;top:858.5px;font-size:12.5px;color:#444;white-space:nowrap;line-height:1;-webkit-text-stroke:0.25px #444;">Sheet3</div>
<div class="a" style="left:529.8px;top:858.5px;font-size:11px;color:#444;white-space:nowrap;line-height:1;-webkit-text-stroke:0.25px #444;letter-spacing:0.4px">ピボットテーブル_練習用データ③成績表</div>
<div class="a" style="left:786.8px;top:858.5px;font-size:11px;color:#3b7a4c;white-space:nowrap;line-height:1;-webkit-text-stroke:0.25px #3b7a4c;letter-spacing:-0.08px">ピボットテーブル_練習用データ④リルガミンビル</div>
<div class="a" style="left:0;top:877px;width:1440px;height:23px;background:linear-gradient(#e6e6e6,#d6d6d6)"></div>
<div class="a" style="left:25px;top:883.5px;font-size:11px;color:#555;line-height:1;-webkit-text-stroke:0.25px #555">準備完了</div>
<div class="a" style="left:1121px;top:877px;width:37px;height:23px;background:#a9a9a9"></div>
<svg class="a" style="left:1100px;top:877px" width="340" height="23" viewBox="1100 877 340 23">
<g fill="#fff"><rect x="1133" y="882" width="13" height="13" rx="1"/></g>
<g fill="#a9a9a9"><rect x="1136.8" y="882" width="1" height="13"/><rect x="1141" y="882" width="1" height="13"/><rect x="1133" y="885.8" width="13" height="1"/><rect x="1133" y="890" width="13" height="1"/></g>
<rect x="1169" y="882.6" width="13" height="12" rx="1" fill="none" stroke="#6a6a6a" stroke-width="1.1"/>
<rect x="1171.6" y="884.6" width="7.8" height="8" fill="none" stroke="#6a6a6a" stroke-width="0.9"/>
<path d="M1174 886.6 H1177 M1174 888.6 H1177 M1174 890.6 H1177" stroke="#6a6a6a" stroke-width="0.8"/>
<path d="M1204.4 882.6 H1217.6 V894.6 H1204.4 Z M1204.4 889 H1213.4 V882.6 M1208.6 882.6 V889" fill="none" stroke="#6a6a6a" stroke-width="1.1"/>
<rect x="1237" y="887.8" width="8.2" height="1.6" fill="#555"/>
<rect x="1252.3" y="886.8" width="99.7" height="3.8" rx="1.9" fill="#9b9b9b"/>
<circle cx="1301.8" cy="888.8" r="7.4" fill="#fff" stroke="rgba(0,0,0,.18)" stroke-width="0.6"/>
<path d="M1358.8 888.6 H1367.4 M1363.1 884.3 V892.9" stroke="#555" stroke-width="1.6"/>
</svg>
<div class="a" style="left:1383.5px;top:883px;font-size:12px;color:#555;line-height:1">100%</div>
<div class="a" style="left:269px;top:211px;width:267px;height:410px;background:#ebe9ef;border-radius:9px;box-shadow:0 0 0 0.5px rgba(0,0,0,.28),0 3px 12px rgba(0,0,0,.22);overflow:hidden">
<div class="a" style="left:0;top:0;width:267px;height:19px;background:#efedf3;border-bottom:1px solid #d5d3da"></div>
<div class="a" style="left:4.7px;top:4.6px;width:9.4px;height:9.4px;border-radius:50%;background:#ec6a5f"></div>
</div>
<div class="a" style="left:380px;top:215px;font-size:11px;color:#6d6d6d;white-space:nowrap;line-height:1;-webkit-text-stroke:0.25px #6d6d6d;">カテゴリ</div>
<div class="a" style="left:280px;top:236.5px;font-size:10.2px;color:#222;white-space:nowrap;line-height:1;-webkit-text-stroke:0.25px #222;font-weight:bold">並べ替え</div>
<div class="a" style="left:289px;top:257px;width:112px;height:24px;border:1px solid #a9a9a9;border-radius:1px;background:linear-gradient(#fbfbfb,#f1f1f1)"></div>
<div class="a" style="left:314.5px;top:264.2px;font-size:12px;color:#2a2a2a;white-space:nowrap;line-height:1;-webkit-text-stroke:0.25px #2a2a2a;">昇順</div>
<div class="a" style="left:404px;top:257px;width:112px;height:24px;border:1px solid #a9a9a9;border-radius:1px;background:linear-gradient(#fbfbfb,#f1f1f1)"></div>
<div class="a" style="left:429.5px;top:264.2px;font-size:12px;color:#2a2a2a;white-space:nowrap;line-height:1;-webkit-text-stroke:0.25px #2a2a2a;">降順</div>
<svg class="a" style="left:0;top:0" width="1440" height="900" viewBox="0 0 1440 900" pointer-events="none">
<g font-family="Liberation Sans" font-weight="bold" font-size="9.6">
<text x="294.4" y="268" fill="#3b7dd8">A</text><text x="294.8" y="277.3" fill="#333">Z</text>
<text x="409.8" y="268" fill="#333">Z</text><text x="409.4" y="277.3" fill="#3b7dd8">A</text>
</g>
<path d="M306.9 265.2 V273 M304.2 270.4 L306.9 274.2 L309.6 270.4" stroke="#2b2b2b" stroke-width="1.6" fill="none"/>
<path d="M421.9 265.2 V273 M419.2 270.4 L421.9 274.2 L424.6 270.4" stroke="#2b2b2b" stroke-width="1.6" fill="none"/>
</svg>
<div class="a" style="left:289.5px;top:292px;font-size:11px;color:#333;white-space:nowrap;line-height:1;-webkit-text-stroke:0.25px #333;">色別:</div>
<div class="a" style="left:341px;top:289px;width:175px;height:16px;background:#fff;border-radius:5px;box-shadow:0 0.5px 1.5px rgba(0,0,0,.22)"></div>
<div class="a" style="left:346.5px;top:291.5px;font-size:11px;color:#222;white-space:nowrap;line-height:1;-webkit-text-stroke:0.25px #222;">なし</div>
<svg class="a" style="left:502px;top:291px" width="12" height="12.5" viewBox="0 0 12 12.5"><defs><linearGradient id="sg" x1="0" y1="0" x2="0" y2="1"><stop offset="0" stop-color="#4a8c5c"/><stop offset="1" stop-color="#2f6e43"/></linearGradient></defs><rect x="0" y="0" width="12" height="12.5" rx="3" fill="url(#sg)"/><path d="M3.7 5 L6 2.8 L8.3 5 M3.7 7.5 L6 9.7 L8.3 7.5" stroke="#fff" stroke-width="1.1" fill="none"/></svg>
<div class="a" style="left:289px;top:313px;width:227px;height:1px;background:#d3d1d7"></div>
<div class="a" style="left:280.5px;top:320.2px;font-size:10.2px;color:#222;white-space:nowrap;line-height:1;-webkit-text-stroke:0.25px #222;font-weight:bold;letter-spacing:-0.25px">フィルター</div>
<div class="a" style="left:289.5px;top:343px;font-size:11px;color:#333;white-space:nowrap;line-height:1;-webkit-text-stroke:0.25px #333;">色別:</div>
<div class="a" style="left:341px;top:340px;width:175px;height:16px;background:#fff;border-radius:5px;box-shadow:0 0.5px 1.5px rgba(0,0,0,.22)"></div>
<div class="a" style="left:346.5px;top:342.5px;font-size:11px;color:#222;white-space:nowrap;line-height:1;-webkit-text-stroke:0.25px #222;">なし</div>
<svg class="a" style="left:502px;top:342px" width="12" height="12.5" viewBox="0 0 12 12.5"><defs><linearGradient id="sg" x1="0" y1="0" x2="0" y2="1"><stop offset="0" stop-color="#4a8c5c"/><stop offset="1" stop-color="#2f6e43"/></linearGradient></defs><rect x="0" y="0" width="12" height="12.5" rx="3" fill="url(#sg)"/><path d="M3.7 5 L6 2.8 L8.3 5 M3.7 7.5 L6 9.7 L8.3 7.5" stroke="#fff" stroke-width="1.1" fill="none"/></svg>
<div class="a" style="left:289px;top:367px;width:126px;height:16px;background:#fff;border-radius:5px;box-shadow:0 0.5px 1.5px rgba(0,0,0,.22)"></div>
<div class="a" style="left:295px;top:369.8px;font-size:10.4px;color:#2b2b2b;white-space:nowrap;line-height:1;-webkit-text-stroke:0.25px #2b2b2b;">1 つ選択してください</div>
<svg class="a" style="left:401px;top:369px" width="12" height="12.5" viewBox="0 0 12 12.5"><defs><linearGradient id="sg" x1="0" y1="0" x2="0" y2="1"><stop offset="0" stop-color="#4a8c5c"/><stop offset="1" stop-color="#2f6e43"/></linearGradient></defs><rect x="0" y="0" width="12" height="12.5" rx="3" fill="url(#sg)"/><path d="M3.7 5 L6 2.8 L8.3 5 M3.7 7.5 L6 9.7 L8.3 7.5" stroke="#fff" stroke-width="1.1" fill="none"/></svg>
<div class="a" style="left:424px;top:365px;width:85px;height:20px;background:#fff;border:1px solid #cdcdcd;border-top-color:#bdbdbd;border-radius:2px"></div>
<div class="a" style="left:495px;top:366px;width:1px;height:18px;background:#e4e4e4"></div>
<svg class="a" style="left:499.5px;top:370.5px" width="6" height="5"><path d="M0 0.3 H5.6 L2.8 4.5 Z" fill="#555"/></svg>
<div class="a" style="left:287px;top:393px;width:231px;height:22px;background:#fff;border:3.5px solid #87a88e;border-radius:7px"></div>
<svg class="a" style="left:294px;top:396px" width="18" height="16"><circle cx="7.8" cy="7.2" r="4.9" stroke="#222" stroke-width="1.2" fill="none"/><path d="M11.2 10.6 L14.4 13.8" stroke="#222" stroke-width="1.4"/></svg>
<div class="a" style="left:314px;top:397.5px;width:1px;height:13.5px;background:#222"></div>
<div class="a" style="left:316px;top:398.8px;font-size:10.5px;color:#c2c2c2;white-space:nowrap;line-height:1;-webkit-text-stroke:0.25px #c2c2c2;">検索</div>
<div class="a" style="left:289px;top:421px;width:227px;height:150px;background:#fff"></div>
<svg class="a" style="left:316px;top:434px" width="14" height="14" viewBox="0 0 14 14"><defs><linearGradient id="cg" x1="0" y1="0" x2="0" y2="1"><stop offset="0" stop-color="#4d8f5f"/><stop offset="1" stop-color="#2f6d43"/></linearGradient></defs><rect x="0" y="0" width="14" height="14" rx="3.2" fill="url(#cg)"/><path d="M3 7.4 L6 10.5 L11.2 3.4" stroke="#fff" stroke-width="2" fill="none" stroke-linecap="round" stroke-linejoin="round"/></svg>
<div class="a" style="left:336.5px;top:435.6px;font-size:12px;color:#2a2a2a;white-space:nowrap;line-height:1;-webkit-text-stroke:0.25px #2a2a2a;">(すべて選択)</div>
<svg class="a" style="left:316px;top:454px" width="14" height="14" viewBox="0 0 14 14"><defs><linearGradient id="cg" x1="0" y1="0" x2="0" y2="1"><stop offset="0" stop-color="#4d8f5f"/><stop offset="1" stop-color="#2f6d43"/></linearGradient></defs><rect x="0" y="0" width="14" height="14" rx="3.2" fill="url(#cg)"/><path d="M3 7.4 L6 10.5 L11.2 3.4" stroke="#fff" stroke-width="2" fill="none" stroke-linecap="round" stroke-linejoin="round"/></svg>
<div class="a" style="left:336.5px;top:455.6px;font-size:12px;color:#2a2a2a;white-space:nowrap;line-height:1;-webkit-text-stroke:0.25px #2a2a2a;">雑貨</div>
<svg class="a" style="left:316px;top:474px" width="14" height="14" viewBox="0 0 14 14"><defs><linearGradient id="cg" x1="0" y1="0" x2="0" y2="1"><stop offset="0" stop-color="#4d8f5f"/><stop offset="1" stop-color="#2f6d43"/></linearGradient></defs><rect x="0" y="0" width="14" height="14" rx="3.2" fill="url(#cg)"/><path d="M3 7.4 L6 10.5 L11.2 3.4" stroke="#fff" stroke-width="2" fill="none" stroke-linecap="round" stroke-linejoin="round"/></svg>
<div class="a" style="left:336.5px;top:475.6px;font-size:12px;color:#2a2a2a;white-space:nowrap;line-height:1;-webkit-text-stroke:0.25px #2a2a2a;">食事</div>
<svg class="a" style="left:316px;top:494px" width="14" height="14" viewBox="0 0 14 14"><defs><linearGradient id="cg" x1="0" y1="0" x2="0" y2="1"><stop offset="0" stop-color="#4d8f5f"/><stop offset="1" stop-color="#2f6d43"/></linearGradient></defs><rect x="0" y="0" width="14" height="14" rx="3.2" fill="url(#cg)"/><path d="M3 7.4 L6 10.5 L11.2 3.4" stroke="#fff" stroke-width="2" fill="none" stroke-linecap="round" stroke-linejoin="round"/></svg>
<div class="a" style="left:336.5px;top:495.6px;font-size:12px;color:#2a2a2a;white-space:nowrap;line-height:1;-webkit-text-stroke:0.25px #2a2a2a;">書籍</div>
<svg class="a" style="left:316px;top:514px" width="14" height="14" viewBox="0 0 14 14"><defs><linearGradient id="cg" x1="0" y1="0" x2="0" y2="1"><stop offset="0" stop-color="#4d8f5f"/><stop offset="1" stop-color="#2f6d43"/></linearGradient></defs><rect x="0" y="0" width="14" height="14" rx="3.2" fill="url(#cg)"/><path d="M3 7.4 L6 10.5 L11.2 3.4" stroke="#fff" stroke-width="2" fill="none" stroke-linecap="round" stroke-linejoin="round"/></svg>
<div class="a" style="left:336.5px;top:515.6px;font-size:12px;color:#2a2a2a;white-space:nowrap;line-height:1;-webkit-text-stroke:0.25px #2a2a2a;">美容院</div>
<svg class="a" style="left:316px;top:534px" width="14" height="14" viewBox="0 0 14 14"><defs><linearGradient id="cg" x1="0" y1="0" x2="0" y2="1"><stop offset="0" stop-color="#4d8f5f"/><stop offset="1" stop-color="#2f6d43"/></linearGradient></defs><rect x="0" y="0" width="14" height="14" rx="3.2" fill="url(#cg)"/><path d="M3 7.4 L6 10.5 L11.2 3.4" stroke="#fff" stroke-width="2" fill="none" stroke-linecap="round" stroke-linejoin="round"/></svg>
<div class="a" style="left:336.5px;top:535.6px;font-size:12px;color:#2a2a2a;white-space:nowrap;line-height:1;-webkit-text-stroke:0.25px #2a2a2a;">メンズファッション</div>
<svg class="a" style="left:316px;top:554px" width="14" height="14" viewBox="0 0 14 14"><defs><linearGradient id="cg" x1="0" y1="0" x2="0" y2="1"><stop offset="0" stop-color="#4d8f5f"/><stop offset="1" stop-color="#2f6d43"/></linearGradient></defs><rect x="0" y="0" width="14" height="14" rx="3.2" fill="url(#cg)"/><path d="M3 7.4 L6 10.5 L11.2 3.4" stroke="#fff" stroke-width="2" fill="none" stroke-linecap="round" stroke-linejoin="round"/></svg>
<div class="a" style="left:336.5px;top:555.6px;font-size:12px;color:#2a2a2a;white-space:nowrap;line-height:1;-webkit-text-stroke:0.25px #2a2a2a;">レディースファッション</div>
<svg class="a" style="left:289px;top:577.5px" width="11.5" height="11.5" viewBox="0 0 14 14"><defs><linearGradient id="cg" x1="0" y1="0" x2="0" y2="1"><stop offset="0" stop-color="#4d8f5f"/><stop offset="1" stop-color="#2f6d43"/></linearGradient></defs><rect x="0" y="0" width="14" height="14" rx="3.2" fill="url(#cg)"/><path d="M3 7.4 L6 10.5 L11.2 3.4" stroke="#fff" stroke-width="2" fill="none" stroke-linecap="round" stroke-linejoin="round"/></svg>
<div class="a" style="left:305.5px;top:578.4px;font-size:10px;color:#2a2a2a;white-space:nowrap;line-height:1;-webkit-text-stroke:0.25px #2a2a2a;">自動適用</div>
<div class="a" style="left:304px;top:595px;width:98px;height:16px;background:#f3f1f6;border-radius:4px;box-shadow:0 0 0 0.5px rgba(0,0,0,.08),0 0.5px 1px rgba(0,0,0,.08)"></div>
<div class="a" style="left:304px;top:597.5px;width:98px;text-align:center;font-size:10px;color:#b9b8bc;white-space:nowrap;line-height:1">フィルターの適用</div>
<div class="a" style="left:408px;top:595px;width:108px;height:16px;background:#f3f1f6;border-radius:4px;box-shadow:0 0 0 0.5px rgba(0,0,0,.08),0 0.5px 1px rgba(0,0,0,.08)"></div>
<div class="a" style="left:408px;top:597.5px;width:108px;text-align:center;font-size:10px;color:#b9b8bc;white-space:nowrap;line-height:1">フィルターのクリア</div>
</div></body></html>
